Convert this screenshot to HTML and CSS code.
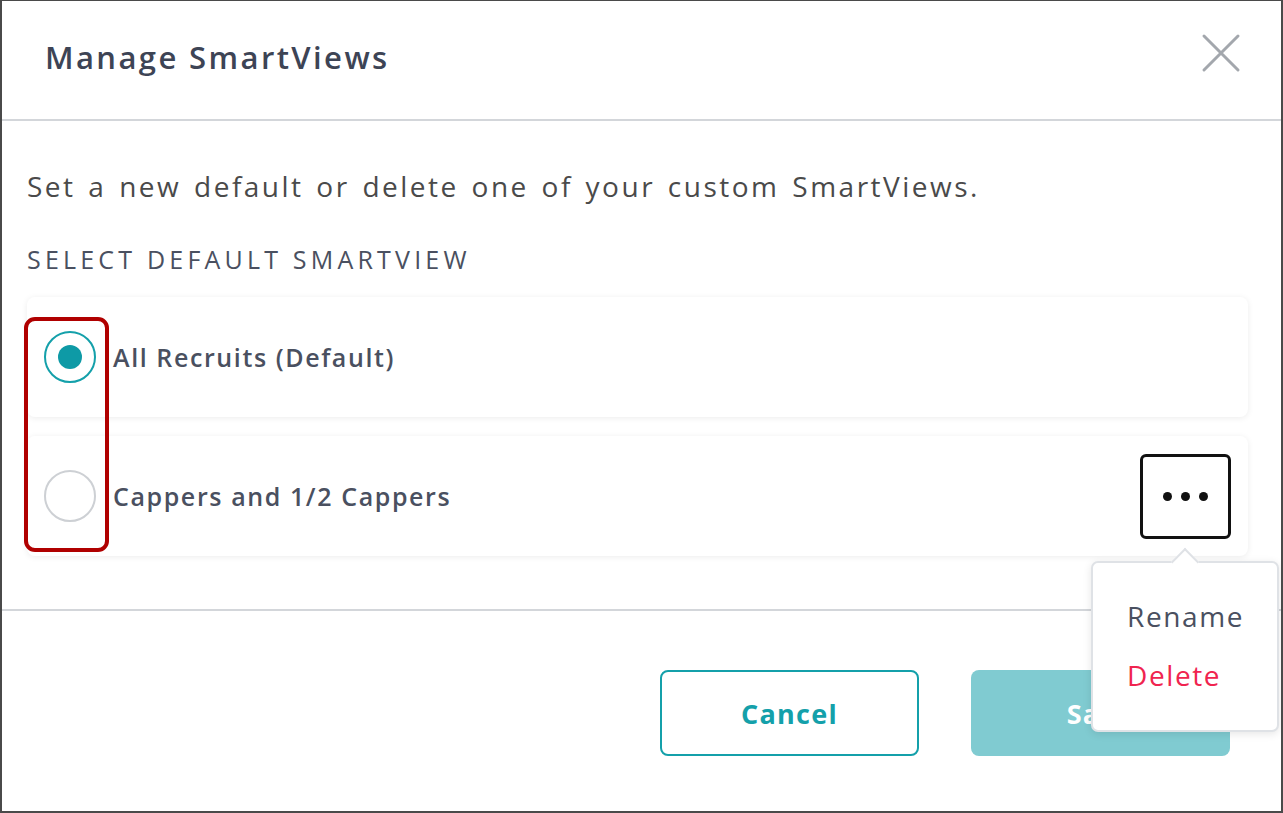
FILE: index.html
```html
<!DOCTYPE html>
<html>
<head>
<meta charset="utf-8">
<link rel="stylesheet" href="styles.css">
</head>
<body>
<div class="frame">
  <div class="header">
    <h1 class="title">Manage SmartViews</h1>
    <svg class="close" width="40" height="40" viewBox="0 0 40 40"><path d="M3 3 L37 37 M37 3 L3 37" stroke="#a3a7ad" stroke-width="3" stroke-linecap="round"/></svg>
  </div>
  <div class="body">
    <p class="intro">Set a new default or delete one of your custom SmartViews.</p>
    <div class="label">SELECT DEFAULT SMARTVIEW</div>
    <div class="list">
      <div class="highlight"></div>
      <div class="card">
        <span class="radio checked"><span class="dot"></span></span>
        <span class="name">All Recruits (Default)</span>
      </div>
      <div class="card">
        <span class="radio"></span>
        <span class="name">Cappers and 1/2 Cappers</span>
        <span class="more"><i></i><i></i><i></i></span>
        <div class="popover">
          <div class="item">Rename</div>
          <div class="item danger">Delete</div>
        </div>
      </div>
    </div>
  </div>
  <div class="footer">
    <button class="btn cancel">Cancel</button>
    <button class="btn save">Save</button>
  </div>
</div>
</body>
</html>
```
FILE: styles.css
```css
* { box-sizing: border-box; }
html, body { margin: 0; padding: 0; background: #fff; }
body { font-family: "Open Sans", Lato, sans-serif; }
.frame {
  width: 1283px; height: 813px;
  border: 2px solid #4a4a4a; border-top-width: 1px;
  position: relative; overflow: hidden; background: #fff;
}
.header {
  height: 120px;
  border-bottom: 2px solid #d3d6da;
  display: flex; align-items: center; justify-content: space-between;
  padding: 0 40px 6px 43px;
}
.title { margin: 0; font-size: 31px; font-weight: 600; color: #3d4455; letter-spacing: 2.4px; line-height: 40px; }
.close { margin-top: -8px; }
.body { padding: 47px 33px 53px 25px; border-bottom: 2px solid #d3d6da; }
.intro { margin: 0; font-size: 28px; color: #4a4a4a; line-height: 36px; letter-spacing: 2.5px; word-spacing: 3px; }
.label { margin-top: 40px; font-size: 25px; color: #4a5060; letter-spacing: 4.2px; line-height: 30px; }
.list { position: relative; margin-top: 23px; display: flex; flex-direction: column; gap: 19px; }
.card {
  height: 120px; background: #fff; border-radius: 8px;
  box-shadow: 0 1px 6px rgba(0,0,0,0.08);
  display: flex; align-items: center; padding: 0 17px 0 17px;
  position: relative;
}
.card:first-of-type { align-items: flex-start; padding-top: 34px; }
.radio {
  width: 52px; height: 52px; border-radius: 50%;
  border: 2px solid #cdd0d4; display: flex; align-items: center; justify-content: center;
  flex: none;
}
.radio.checked { border-color: #14a0aa; }
.dot { width: 24px; height: 24px; border-radius: 50%; background: #0e9aa6; }
.name { margin-left: 17px; font-size: 25px; font-weight: 600; color: #4a5060; margin-top: 0; letter-spacing: 1.6px; }
.card:first-of-type .name { margin-top: 6px; }
.more {
  margin-left: auto; width: 91px; height: 85px; border: 3px solid #111; border-radius: 6px;
  display: flex; align-items: center; justify-content: center; gap: 9px; margin-top: 1px;
}
.more i { width: 9px; height: 9px; border-radius: 50%; background: #111; display: block; }
.highlight {
  position: absolute; left: -3px; top: 20px; width: 85px; height: 235px;
  border: 4px solid #b00000; border-radius: 11px; z-index: 2;
}
.popover {
  position: absolute; left: 1064px; top: 125px; width: 188px; height: 171px;
  background: #fff; border: 2px solid #dfe2e6; border-radius: 7px;
  box-shadow: 0 2px 8px rgba(0,0,0,0.1); z-index: 5;
  padding: 38px 0 0 34px;
}
.popover::before {
  content: ""; position: absolute; left: 82px; top: -11px; width: 18px; height: 18px;
  background: #fff; border-left: 2px solid #dfe2e6; border-top: 2px solid #dfe2e6;
  transform: rotate(45deg);
}
.item { font-size: 28px; color: #4a5060; line-height: 30px; margin-bottom: 29px; letter-spacing: 1.6px; }
.item.danger { color: #f0244f; }
.footer { display: flex; justify-content: flex-end; gap: 52px; padding: 59px 51px 0 0; }
.btn {
  width: 259px; height: 86px; border-radius: 8px; font-family: inherit;
  font-size: 27px; font-weight: 700; letter-spacing: 1.3px;
}
.cancel { background: #fff; border: 2px solid #14a0aa; color: #14a0aa; }
.save { background: #80cbd1; border: none; color: #fff; }
```
